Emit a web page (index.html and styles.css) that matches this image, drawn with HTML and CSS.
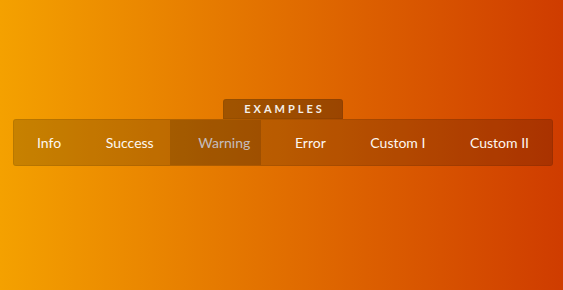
FILE: index.html
```html
<!DOCTYPE html>
<html lang="en">
<head>
  <meta charset="UTF-8" />
  <meta name="viewport" content="width=device-width, initial-scale=1.0" />
  <title>Examples</title>
  <link rel="stylesheet" href="styles.css">
</head>
<body>
  <div class="examples">
    <div class="examples-tab">Examples</div>
    <nav class="examples-nav">
      <a href="#" class="nav-item">Info</a>
      <a href="#" class="nav-item">Success</a>
      <a href="#" class="nav-item active">Warning</a>
      <a href="#" class="nav-item">Error</a>
      <a href="#" class="nav-item">Custom I</a>
      <a href="#" class="nav-item">Custom II</a>
    </nav>
  </div>
</body>
</html>
```

FILE: styles.css
```css
* { box-sizing: border-box; margin: 0; padding: 0; }
html, body { height: 100%; }
body { font-family: Lato, "Open Sans", sans-serif; background: linear-gradient(to right, #f4a100, #cf3c00); }
.examples { width: 540px; margin-left: 13px; padding-top: 99px; display: flex; flex-direction: column; align-items: center; }
.examples-tab { width: 120px; height: 20px; line-height: 20px; text-align: center; background: rgba(0,0,0,0.3); border-radius: 3px 3px 0 0; color: #f4efe9; font-size: 11px; font-weight: 700; text-transform: uppercase; letter-spacing: 3px; padding-left: 3px; box-shadow: inset 0 0 0 1px rgba(0,0,0,0.06); }
.examples-nav { width: 100%; height: 47px; display: flex; align-items: stretch; justify-content: space-between; padding: 0 2px; background: rgba(0,0,0,0.18); border: 1px solid rgba(0,0,0,0.08); border-radius: 3px; }
.nav-item { position: relative; display: flex; align-items: center; flex-shrink: 0; white-space: nowrap; padding: 0 21px 1px; color: #fdf8f2; text-decoration: none; font-size: 14px; }
.nav-item.active { color: #e4dcdc; }
.nav-item.active::before { content: ""; position: absolute; top: 0; bottom: 0; left: -7px; right: 10px; background: rgba(0,0,0,0.14); }
```
